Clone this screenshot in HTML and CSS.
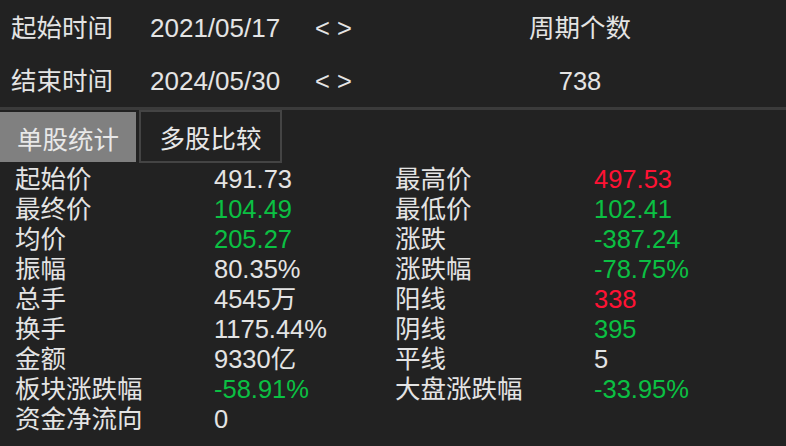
FILE: index.html
```html
<!DOCTYPE html>
<html lang="zh-CN">
<head>
<meta charset="utf-8">
<title>区间统计</title>
<link rel="stylesheet" href="styles.css">
</head>
<body>
<div class="panel">
  <div class="header">
    <div class="hrow">
      <span class="hlabel">起始时间</span>
      <span class="hdate">2021/05/17</span>
      <span class="harrows">&lt; &gt;</span>
      <span class="hcount">周期个数</span>
    </div>
    <div class="hrow">
      <span class="hlabel">结束时间</span>
      <span class="hdate">2024/05/30</span>
      <span class="harrows">&lt; &gt;</span>
      <span class="hcount">738</span>
    </div>
  </div>
  <div class="divider"></div>
  <div class="tabs">
    <div class="tab tab-active">单股统计</div>
    <div class="tab tab-inactive">多股比较</div>
  </div>
  <div class="stats">
    <span class="lbl">起始价</span><span class="val">491.73</span>
    <span class="lbl">最高价</span><span class="val up">497.53</span>

    <span class="lbl">最终价</span><span class="val down">104.49</span>
    <span class="lbl">最低价</span><span class="val down">102.41</span>

    <span class="lbl">均价</span><span class="val down">205.27</span>
    <span class="lbl">涨跌</span><span class="val down">-387.24</span>

    <span class="lbl">振幅</span><span class="val">80.35%</span>
    <span class="lbl">涨跌幅</span><span class="val down">-78.75%</span>

    <span class="lbl">总手</span><span class="val">4545万</span>
    <span class="lbl">阳线</span><span class="val up">338</span>

    <span class="lbl">换手</span><span class="val">1175.44%</span>
    <span class="lbl">阴线</span><span class="val down">395</span>

    <span class="lbl">金额</span><span class="val">9330亿</span>
    <span class="lbl">平线</span><span class="val">5</span>

    <span class="lbl">板块涨跌幅</span><span class="val down">-58.91%</span>
    <span class="lbl">大盘涨跌幅</span><span class="val down">-33.95%</span>

    <span class="lbl">资金净流向</span><span class="val">0</span>
    <span class="lbl"></span><span class="val"></span>
  </div>
</div>
</body>
</html>
```

FILE: styles.css
```css
html, body {
  margin: 0;
  padding: 0;
  background: #222222;
}

body {
  width: 786px;
  height: 446px;
  overflow: hidden;
  color: #e4e4e4;
  font-family: "Liberation Sans", "Noto Sans CJK SC", sans-serif;
  font-size: 25.5px;
}

.panel {
  display: flex;
  flex-direction: column;
}

.header {
  padding-top: 1px;
  display: flex;
  flex-direction: column;
}

.hrow {
  height: 53px;
  display: grid;
  grid-template-columns: 139px 165px 65px 400px;
  align-items: center;
  padding-left: 11px;
  line-height: 30px;
}

.hdate {
  font-size: 26px;
}

.hcount {
  text-align: center;
}

.divider {
  height: 3px;
  background: #3b3b3b;
}

.tabs {
  display: flex;
  align-items: flex-start;
  height: 53px;
}

.tab {
  display: flex;
  align-items: center;
  justify-content: center;
  box-sizing: border-box;
}

.tab-active {
  margin-top: 2px;
  width: 136px;
  height: 50px;
  background: #808080;
  color: #e8e8e8;
}

.tab-inactive {
  margin-left: 3px;
  width: 143px;
  height: 53px;
  border: 2px solid #444444;
  color: #e8e8e8;
}

.stats {
  margin-top: 1px;
  padding-left: 15px;
  display: grid;
  grid-template-columns: 199px 181px 199px 1fr;
  grid-auto-rows: 30px;
  align-items: center;
  line-height: 30px;
}

.up {
  color: #ff1234;
}

.down {
  color: #0bc043;
}
```
